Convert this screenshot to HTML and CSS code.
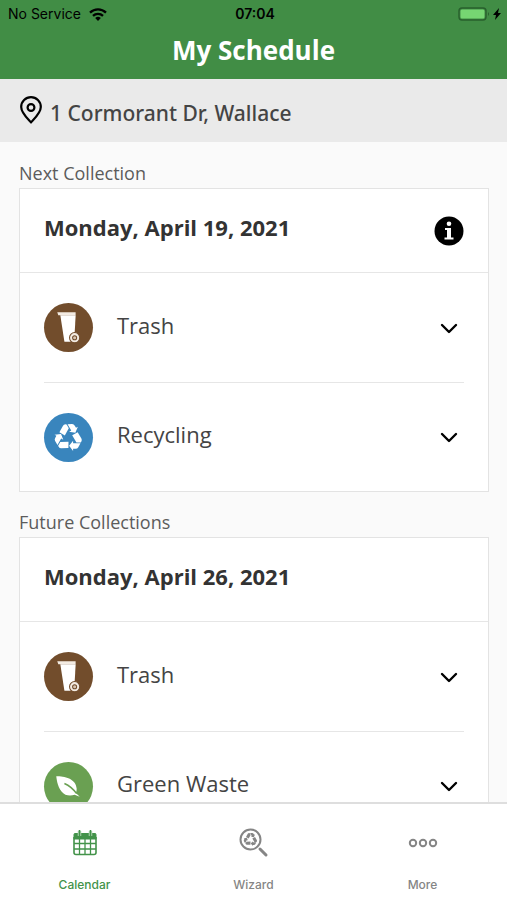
FILE: index.html
```html
<!DOCTYPE html>
<html lang="en">
<head>
<meta charset="utf-8">
<meta name="viewport" content="width=device-width, initial-scale=1">
<title>My Schedule</title>
<link rel="stylesheet" href="styles.css">
</head>
<body>
<svg class="defs" aria-hidden="true">
  <symbol id="recycle" viewBox="-50 -50 100 100">
    <g id="recycle-arm">
      <path d="M12-7 30-17 42 3Q45 8 42 13L40 16H26Z"/>
      <path d="M2 27 15 11V19H39L32 32Q29 37 23 37H15V44Z"/>
    </g>
    <use href="#recycle-arm" transform="rotate(120)"/>
    <use href="#recycle-arm" transform="rotate(240)"/>
  </symbol>
  <symbol id="bin" viewBox="0 0 48 48">
    <path fill="#f3ebe2" d="M13 9h18v3H14z"/>
    <path fill="#fff" d="M16 12h15l-1 18-4 8h-6z"/>
    <circle cx="30" cy="34" r="5" fill="#f3ebe2" stroke="#724d2c"/>
    <circle cx="30" cy="34" r="2" fill="#d8c5b2" stroke="#724d2c"/>
  </symbol>
  <symbol id="chevron" viewBox="0 0 18 12">
    <path d="M2 2l7 7 7-7" fill="none" stroke="#000" stroke-width="2.4" stroke-linecap="round" stroke-linejoin="round"/>
  </symbol>
</svg>

<header class="top">
  <div class="status">
    <span class="carrier">No Service
      <svg width="18" height="13" viewBox="0 0 18 13" aria-hidden="true"><g fill="none" stroke="#000" stroke-width="2.3"><path d="M1 4.6a11.5 11.5 0 0 1 16 0"/><path d="M4 7.8a7.2 7.2 0 0 1 10 0"/></g><path d="M9 13 6.2 10a4 4 0 0 1 5.6 0z"/></svg>
    </span>
    <span class="clock">07:04</span>
    <svg class="battery" width="44" height="14" viewBox="0 0 44 14" aria-hidden="true"><rect x="1" y="1" width="27" height="12" rx="3" fill="none" stroke="#28602d" stroke-width="1.4"/><rect x="2.5" y="2.5" width="24" height="9" rx="1.5" fill="#76d672"/><path d="M30 5q2 2 0 4z" fill="#28602d"/><path d="M41 1l-6 7h3l-1 5 6-7h-3z"/></svg>
  </div>
  <h1>My Schedule</h1>
</header>

<div class="address">
  <svg width="22" height="28" viewBox="0 0 22 28" fill="none" stroke="#000" stroke-width="2.2" aria-hidden="true"><path d="M11 26.4C8 23 1.2 17 1.2 11a9.8 9.8 0 0 1 19.6 0C20.8 17 14 23 11 26.4Z" stroke-linejoin="round"/><circle cx="11" cy="11.5" r="3.4"/></svg>
  <span>1 Cormorant Dr, Wallace</span>
</div>

<main class="schedule">
  <h2>Next Collection</h2>
  <section class="card">
    <div class="card-head">
      <h3>Monday, April 19, 2021</h3>
      <button class="info" aria-label="Information"><svg width="30" height="30" viewBox="0 0 30 30" aria-hidden="true"><circle cx="15" cy="15" r="14.5"/><g fill="#fff"><circle cx="15" cy="7.8" r="2.3"/><path d="M11 12h6v9.500h2.500v2h-9v-2H13v-7.500h-2z"/></g></svg></button>
    </div>
    <button class="row">
      <svg class="badge trash" aria-hidden="true"><use href="#bin"/></svg>
      <span>Trash</span>
      <svg class="chevron" aria-hidden="true"><use href="#chevron"/></svg>
    </button>
    <button class="row">
      <svg class="badge recycling" viewBox="0 0 48 48" aria-hidden="true"><use href="#recycle" x="9" y="9" width="30" height="30"/></svg>
      <span>Recycling</span>
      <svg class="chevron" aria-hidden="true"><use href="#chevron"/></svg>
    </button>
  </section>

  <h2>Future Collections</h2>
  <section class="card">
    <div class="card-head">
      <h3>Monday, April 26, 2021</h3>
    </div>
    <button class="row">
      <svg class="badge trash" aria-hidden="true"><use href="#bin"/></svg>
      <span>Trash</span>
      <svg class="chevron" aria-hidden="true"><use href="#chevron"/></svg>
    </button>
    <button class="row">
      <svg class="badge green" viewBox="0 0 48 48" aria-hidden="true"><path d="M12 14c8 0 19 2 20 12 0 2 0 3-1 4l4 4-5-2c-3 1-6 1-9 0-6-3-8-10-9-18z"/><path d="M20 21q7 3 12 10" fill="none" stroke="#6aa052" stroke-width="1.5"/></svg>
      <span>Green Waste</span>
      <svg class="chevron" aria-hidden="true"><use href="#chevron"/></svg>
    </button>
  </section>
</main>

<nav class="tabs">
  <a href="#calendar" class="active">
    <svg width="30" height="30" viewBox="0 0 30 30" fill="none" stroke="#43934a" aria-hidden="true"><path d="M4 6.500q0-1 1-1h20q1 0 1 1V11H4z" fill="#43934a"/><path d="M4 9v15.500q0 2 2 2h18q2 0 2-2V9" stroke-width="1.6"/><path d="M4 15.500h22M4 21h22M9.500 11v15M15 11v15M20.500 11v15" stroke-width="1.3"/><path d="M9.500 3v5M20.500 3v5" stroke="#b5d8b7" stroke-width="3.5"/><path d="M9.500 2v6M20.500 2v6" stroke-width="1.6"/></svg>
    <span>Calendar</span>
  </a>
  <a href="#wizard">
    <svg width="30" height="30" viewBox="0 0 30 30" aria-hidden="true"><circle cx="11.500" cy="11.500" r="10" fill="none" stroke="#858585" stroke-width="2"/><use href="#recycle" x="4" y="4" width="15" height="15" fill="#858585"/><path d="M21 21l6 6" stroke="#858585" stroke-width="3" stroke-linecap="round"/></svg>
    <span>Wizard</span>
  </a>
  <a href="#more">
    <svg width="30" height="30" viewBox="0 0 30 30" fill="none" stroke="#858585" stroke-width="2" aria-hidden="true"><circle cx="5" cy="15" r="3.2"/><circle cx="15" cy="15" r="3.2"/><circle cx="25" cy="15" r="3.2"/></svg>
    <span>More</span>
  </a>
</nav>
</body>
</html>
```
FILE: styles.css
```css
* {
  box-sizing: border-box;
}

body {
  margin: 0;
  height: 100vh;
  display: flex;
  flex-direction: column;
  overflow: hidden;
  background: #fafafa;
  color: #444;
  font-family: "Open Sans", "Noto Sans", sans-serif;
}

h1, h2, h3 {
  margin: 0;
}

button {
  border: 0;
  padding: 0;
  background: none;
  color: inherit;
  font: inherit;
}

svg {
  display: block;
  flex: none;
}

.defs {
  position: absolute;
  width: 0;
  height: 0;
}

.top {
  flex: none;
  background: #418d45;
  padding-bottom: 11px;
}

.status {
  display: grid;
  grid-template-columns: 1fr auto 1fr;
  align-items: center;
  height: 28px;
  padding: 0 5px 0 8px;
  color: #000;
  font: 14px/20px Inter, sans-serif;
}

.carrier {
  display: flex;
  align-items: center;
  gap: 8px;
}

.clock {
  font-weight: 600;
}

.battery {
  justify-self: end;
}

h1 {
  padding-top: 4px;
  color: #fff;
  font-size: 26px;
  line-height: 36px;
  font-weight: 700;
  text-align: center;
}

.address {
  flex: none;
  display: flex;
  align-items: center;
  gap: 8px;
  padding: 16px 20px;
  background: #eaeaea;
  font-family: "Noto Sans", sans-serif;
  font-size: 21px;
  line-height: 26px;
  font-weight: 500;
}

.address span {
  padding-top: 5px;
}

.address svg {
  margin: 1px 0 2px;
}

.schedule {
  flex: 1;
  min-height: 0;
  overflow: hidden;
  padding: 1px 18px 0 19px;
}

h2 {
  padding: 18px 0 3px;
  color: #5c5c5c;
  font-size: 18px;
  line-height: 24px;
  font-weight: 400;
}

.card {
  background: #fff;
  border: 1px solid #e3e3e3;
}

.card-head {
  display: flex;
  align-items: center;
  justify-content: space-between;
  height: 84px;
  padding: 0 24px;
  border-bottom: 1px solid #e6e6e6;
}

h3 {
  color: #333;
  font-size: 22px;
  line-height: 32px;
  font-weight: 700;
  padding-bottom: 8px;
}

.row {
  display: flex;
  align-items: center;
  gap: 24px;
  width: calc(100% - 48px);
  height: 109px;
  margin: 0 24px;
  text-align: left;
  font-size: 22px;
  line-height: 32px;
}

.row + .row {
  border-top: 1px solid #e6e6e6;
}

.row span {
  flex: 1;
  padding-bottom: 6px;
}

.badge {
  width: 49px;
  height: 49px;
  border-radius: 50%;
  fill: #fff;
}

.trash {
  background: #724d2c;
}

.recycling {
  background: #3985bd;
}

.green {
  background: #6aa052;
}

.chevron {
  width: 18px;
  height: 12px;
  margin: 2px 6px 0 0;
}

.tabs {
  flex: none;
  display: grid;
  grid-template-columns: repeat(3, 1fr);
  padding: 24px 0 6px;
  border-top: 2px solid #dedede;
  background: #fff;
}

.tabs a {
  display: flex;
  flex-direction: column;
  align-items: center;
  gap: 18px;
  color: #858585;
  font: 500 12px/18px Inter, sans-serif;
  text-decoration: none;
}

.tabs .active {
  color: #43934a;
}
```
